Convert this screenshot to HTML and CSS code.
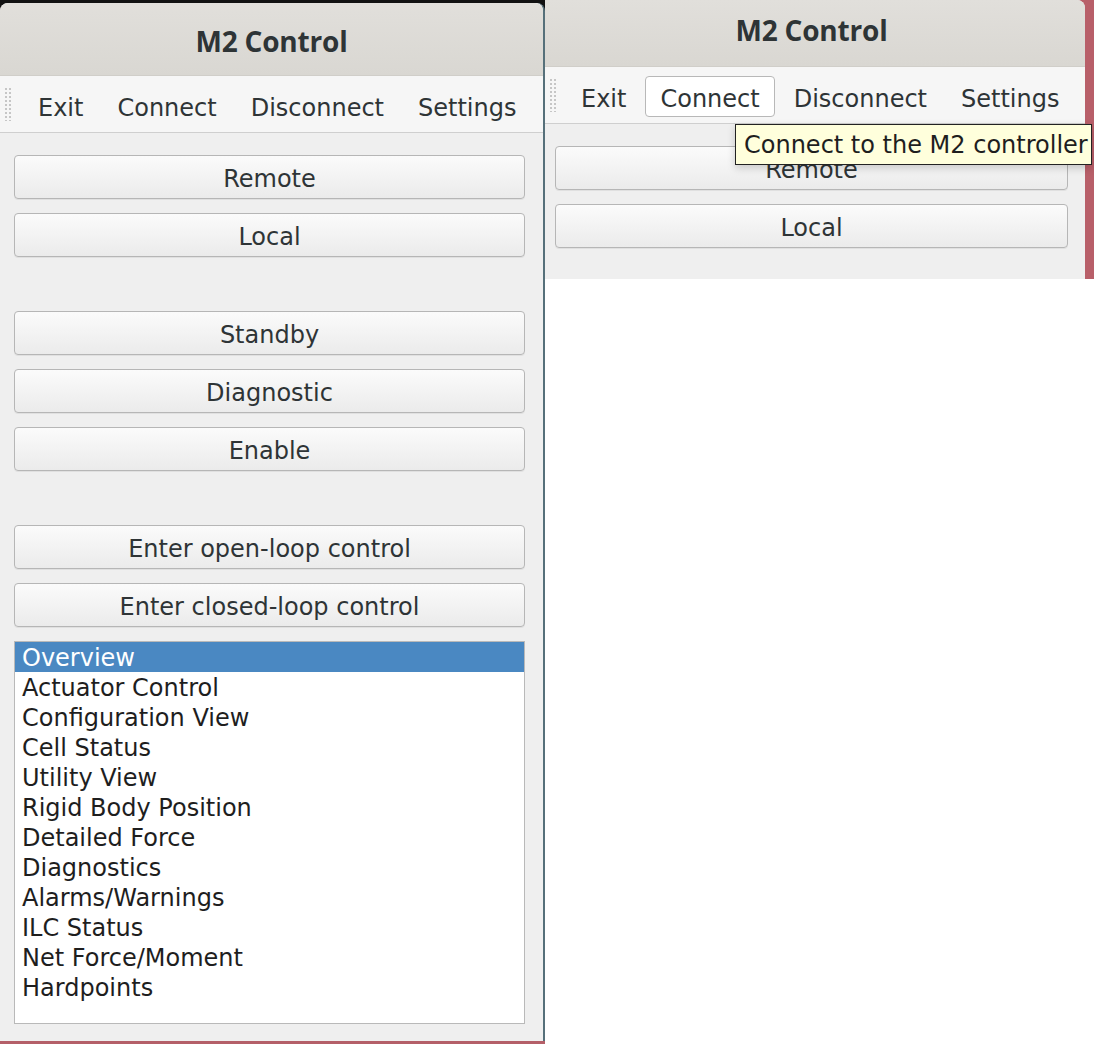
FILE: index.html
```html
<!DOCTYPE html>
<html lang="en">
<head>
    <meta charset="UTF-8">
    <title>M2 Control</title>
    <link rel="stylesheet" href="styles.css">
</head>
<body>
    <div class="screen">
        <div class="left-frame">
            <div class="window">
                <div class="titlebar"><span class="title">M2 Control</span></div>
                <div class="toolbar">
                    <span class="handle"></span>
                    <span class="tool">Exit</span>
                    <span class="tool">Connect</span>
                    <span class="tool">Disconnect</span>
                    <span class="tool">Settings</span>
                </div>
                <div class="content">
                    <button class="btn">Remote</button>
                    <button class="btn">Local</button>
                    <div class="spacer"></div>
                    <button class="btn">Standby</button>
                    <button class="btn">Diagnostic</button>
                    <button class="btn">Enable</button>
                    <div class="spacer"></div>
                    <button class="btn">Enter open-loop control</button>
                    <button class="btn">Enter closed-loop control</button>
                    <ul class="page-list">
                        <li class="selected">Overview</li>
                        <li>Actuator Control</li>
                        <li>Configuration View</li>
                        <li>Cell Status</li>
                        <li>Utility View</li>
                        <li>Rigid Body Position</li>
                        <li>Detailed Force</li>
                        <li>Diagnostics</li>
                        <li>Alarms/Warnings</li>
                        <li>ILC Status</li>
                        <li>Net Force/Moment</li>
                        <li>Hardpoints</li>
                    </ul>
                </div>
            </div>
        </div>

        <div class="right-frame">
            <div class="right-top">
                <div class="window window-small">
                    <div class="titlebar titlebar-cut"><span class="title">M2 Control</span></div>
                    <div class="toolbar">
                        <span class="handle handle-small"></span>
                        <span class="tool">Exit</span>
                        <span class="tool hover">Connect</span>
                        <span class="tool">Disconnect</span>
                        <span class="tool">Settings</span>
                    </div>
                    <div class="content content-small">
                        <button class="btn">Remote</button>
                        <button class="btn">Local</button>
                    </div>
                    <div class="tooltip">Connect to the M2 controller</div>
                </div>
            </div>
            <div class="blank"></div>
        </div>
    </div>
</body>
</html>
```

FILE: styles.css
```css
* {
    margin: 0;
    padding: 0;
    box-sizing: border-box;
}

body {
    font-family: 'DejaVu Sans', 'Liberation Sans', sans-serif;
    background: #ffffff;
    color: #2e3436;
}

.screen {
    display: flex;
    width: 1094px;
    height: 1044px;
    overflow: hidden;
}

.left-frame {
    width: 545px;
    height: 1044px;
    padding-top: 3px;
    padding-bottom: 3px;
    background: linear-gradient(#111111 0 12px, #b45f68 12px);
}

.window {
    position: relative;
    display: flex;
    flex-direction: column;
    height: 100%;
    background: #efefef;
    border-radius: 8px 8px 0 0;
    border-right: 2px solid #56707a;
}

.titlebar {
    height: 73px;
    display: flex;
    align-items: center;
    justify-content: center;
    padding-top: 3px;
    background: linear-gradient(#e1dfdb, #d9d7d2);
    border-radius: 8px 8px 0 0;
    border-bottom: 1px solid #d0cec9;
}

.title {
    font-family: 'Open Sans', 'DejaVu Sans', sans-serif;
    font-weight: 700;
    font-size: 28px;
    color: #2e3436;
    letter-spacing: -0.2px;
}

.toolbar {
    display: flex;
    align-items: flex-start;
    height: 57px;
    padding-top: 9px;
    background: #f6f6f6;
    border-bottom: 1px solid #cfcfcf;
}

.handle {
    width: 21px;
    height: 34px;
    margin-top: 2px;
    padding-left: 4px;
    padding-right: 9px;
    background-image: radial-gradient(circle, #c6c6c6 1.1px, transparent 1.5px);
    background-size: 4px 4px;
    background-origin: content-box;
    background-clip: content-box;
}

.handle-small {
    width: 19px;
    padding-right: 7px;
}

.tool {
    display: flex;
    align-items: center;
    height: 41px;
    margin: 0 2px;
    padding: 4px 14px 0;
    border: 1px solid transparent;
    border-radius: 4px;
    font-size: 24px;
    color: #2e3436;
    white-space: nowrap;
}

.tool.hover {
    background: #ffffff;
    border-color: #b8b8b8;
}

.content {
    flex: 1;
    display: flex;
    flex-direction: column;
    gap: 14px;
    padding: 22px 18px 17px 14px;
}

.btn {
    height: 44px;
    flex-shrink: 0;
    font-family: 'DejaVu Sans', 'Liberation Sans', sans-serif;
    font-size: 24px;
    color: #2e3436;
    background: linear-gradient(#fbfbfb, #ebebeb);
    border: 1px solid #b6b6b6;
    border-radius: 4px;
    box-shadow: 0 1px 0 rgba(0, 0, 0, 0.06);
    padding-top: 4px;
}

.spacer {
    height: 26px;
    flex-shrink: 0;
}

.page-list {
    flex: 1;
    list-style: none;
    background: #ffffff;
    border: 1px solid #b9b9b9;
}

.page-list li {
    height: 30px;
    line-height: 27px;
    padding-top: 3px;
    padding-left: 7px;
    font-size: 24px;
    color: #1e1e1e;
    white-space: nowrap;
}

.page-list li.selected {
    background: #4a88c2;
    color: #ffffff;
}

/* right hand screenshot */
.right-frame {
    flex: 1;
    display: flex;
    flex-direction: column;
}

.right-top {
    height: 279px;
    padding-right: 9px;
    background: #b85f69;
}

.window-small {
    border-right: none;
    border-radius: 0 8px 0 0;
}

.titlebar-cut {
    height: 67px;
    padding-top: 0;
    padding-bottom: 7px;
    padding-right: 7px;
    border-radius: 0 8px 0 0;
}

.content-small {
    padding: 22px 17px 0 10px;
}

.tooltip {
    position: absolute;
    top: 124px;
    left: 190px;
    width: 357px;
    height: 41px;
    padding: 6px 0 0 8px;
    background: #ffffdc;
    border: 1px solid #222222;
    font-size: 24px;
    color: #1e1e1e;
    white-space: nowrap;
    box-shadow: 0 3px 8px rgba(0, 0, 0, 0.18);
}

.blank {
    flex: 1;
    background: #ffffff;
}
```
